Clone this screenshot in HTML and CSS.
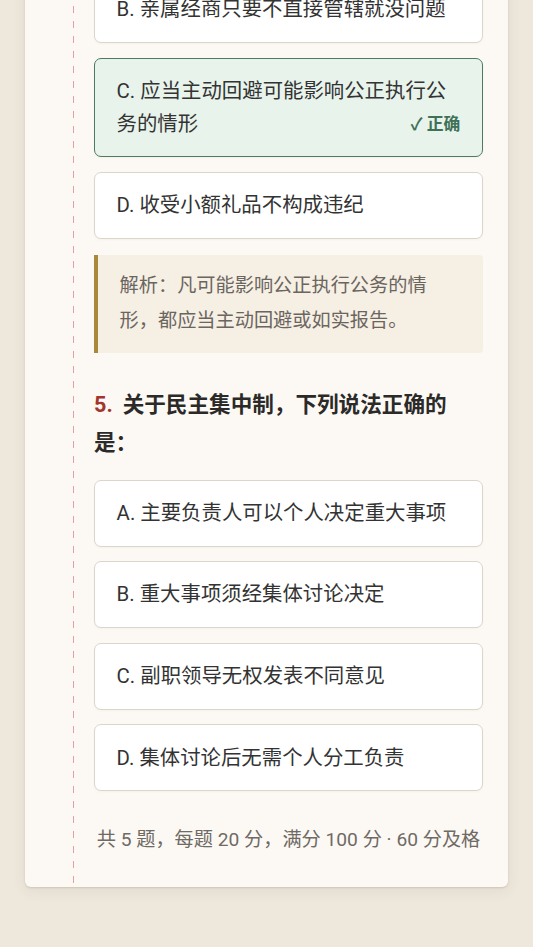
FILE: index.html
```html
<!DOCTYPE html>
<html lang="zh-CN">
<head>
<meta charset="utf-8">
<title>廉政知识测试</title>
<link rel="stylesheet" href="styles.css">
</head>
<body>
<div class="page">
  <div class="card">
    <div class="margin-line"></div>
    <section class="question q4">
      <div class="options">
        <div class="option">B. 亲属经商只要不直接管辖就没问题</div>
        <div class="option correct"><span class="opt-text">C. 应当主动回避可能影响公正执行公务的情形</span><span class="tag">✓ 正确</span></div>
        <div class="option">D. 收受小额礼品不构成违纪</div>
      </div>
      <div class="analysis">解析：凡可能影响公正执行公务的情形，都应当主动回避或如实报告。</div>
    </section>
    <section class="question q5">
      <h3 class="q-title"><span class="num">5.</span><span class="q-text">关于民主集中制，下列说法正确的是：</span></h3>
      <div class="options">
        <div class="option">A. 主要负责人可以个人决定重大事项</div>
        <div class="option">B. 重大事项须经集体讨论决定</div>
        <div class="option">C. 副职领导无权发表不同意见</div>
        <div class="option">D. 集体讨论后无需个人分工负责</div>
      </div>
    </section>
    <p class="footer">共 5 题，每题 20 分，满分 100 分 · 60 分及格</p>
  </div>
</div>
</body>
</html>
```

FILE: styles.css
```css
html, body {
  margin: 0;
  padding: 0;
}

body {
  background: #ede7dc;
  font-family: Roboto, "Noto Sans CJK SC", "Noto Sans", sans-serif;
  color: #333;
}

.page {
  padding: 0 25px 61px;
}

.card {
  position: relative;
  margin-top: -23.9px;
  background: #fcf9f4;
  border-radius: 6px;
  box-shadow: 0 1px 2px rgba(110, 90, 60, 0.2), 0 4px 14px rgba(110, 90, 60, 0.08);
  padding: 0 25px 32px 69px;
}

.margin-line {
  position: absolute;
  left: 48px;
  top: 0;
  bottom: 0;
  width: 1px;
  background: repeating-linear-gradient(to bottom, #e0a0a6 0 7px, transparent 7px 15px);
}

.options {
  display: flex;
  flex-direction: column;
  gap: 14.4px;
}

.option {
  background: #ffffff;
  border: 1px solid #dcd5ca;
  border-radius: 7px;
  padding: 16.3px 21.6px;
  font-size: 20.4px;
  line-height: 32.6px;
  color: #333;
  box-shadow: 0 1px 2px rgba(120, 100, 70, 0.05);
}

.option.correct {
  background: #e8f3ec;
  border-color: #4d7a60;
}

.tag {
  float: right;
  margin-left: 8px;
  font-size: 16.8px;
  font-weight: 700;
  color: #3f7157;
  line-height: 32.6px;
}

.analysis {
  margin-top: 16px;
  background: #f5efe4;
  border-left: 4px solid #a88a3a;
  border-radius: 0 4px 4px 0;
  padding: 14.4px 44px 14.4px 21.6px;
  font-size: 19.2px;
  line-height: 34.5px;
  color: #6b6560;
}

.q5 {
  margin-top: 32.7px;
}

.q-title {
  margin: 0 0 18px;
  padding-right: 24px;
  font-size: 21.6px;
  line-height: 38px;
  font-weight: 700;
  color: #2b2a28;
}

.num {
  color: #a3352e;
  margin-right: 10px;
}

.footer {
  margin: 35px 0 0;
  text-align: center;
  white-space: nowrap;
  font-size: 19.2px;
  line-height: 28.8px;
  color: #6f6a64;
}
```
